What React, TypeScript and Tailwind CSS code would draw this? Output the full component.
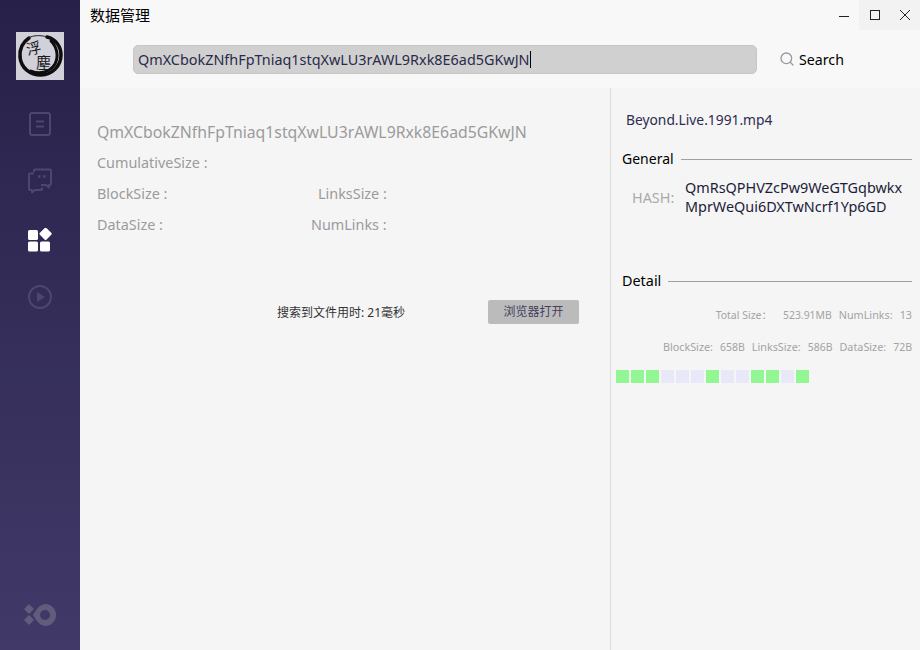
import React from 'react';
import { Search } from 'lucide-react';

const font = "font-['Noto_Sans','Noto_Sans_CJK_SC',sans-serif]";

const blocks = [1, 1, 1, 0, 0, 0, 1, 0, 0, 1, 1, 0, 1];

const Logo: React.FC = () => (
  <div className="w-12 h-12 bg-[#d2d0d9] flex items-center justify-center">
    <svg width="48" height="48" viewBox="0 0 48 48" fill="none">
      {/* brush ring, heavy along the bottom */}
      <path d="M31 5 C40 7 45 15 45 23 C45 34 36 43 25 43 C14 43 5 36 4 25 C3.500 17 7 10 13 6" stroke="#0e0e0e" strokeWidth="3.500" strokeLinecap="round" />
      <path d="M35 9 C41 15 43 24 39 32 C34 40 24 43 15 39" stroke="#0e0e0e" strokeWidth="3" strokeLinecap="round" />
      <path d="M12 6 C18 3 25 3 31 5" stroke="#222222" strokeWidth="1" />
      <text x="10" y="22" fontSize="15" fill="#1a1a1a" fontFamily="'Noto Sans CJK TC',sans-serif" transform="rotate(-12 17 16)">浮</text>
      <text x="20" y="36" fontSize="15" fill="#1a1a1a" fontFamily="'Noto Sans CJK TC',sans-serif">塵</text>
    </svg>
  </div>
);

const Sidebar: React.FC = () => (
  <div className="w-20 shrink-0 h-full flex flex-col items-center bg-gradient-to-b from-[#272149] to-[#413a69]">
    <div className="mt-8">
      <Logo />
    </div>
    <div className="mt-[31px] text-[#4c4670]">
      <svg width="24" height="26" viewBox="0 0 24 26" fill="none" stroke="currentColor" strokeWidth="2">
        <rect x="2" y="2" width="20" height="22" rx="2" />
        <path d="M8 10.500h8M8 15.500h8" />
      </svg>
    </div>
    <div className="mt-[31px] text-[#4c4670]">
      <svg width="26" height="26" viewBox="0 0 26 26" fill="none" stroke="currentColor" strokeWidth="2" strokeLinejoin="round">
        <path d="M7 4V2.500a1 1 0 0 1 1-1h15a1 1 0 0 1 1 1V16a1 1 0 0 1-1 1h-1v2.500L19 17h-5" />
        <path d="M7 5.500H3a1 1 0 0 0-1 1V21a1 1 0 0 0 1 1h2v2.500L8 22h6a1 1 0 0 0 1-1v-1.500" />
        <path d="M11 8.500h2.500M16 8.500h2.500" strokeWidth="2.500" />
      </svg>
    </div>
    <div className="mt-[34px]">
      <svg width="24" height="24" viewBox="0 0 24 24" fill="#ffffff">
        <rect x="0" y="2" width="10" height="10" rx="1.500" />
        <rect x="0" y="13.500" width="10" height="10" rx="1.500" />
        <rect x="12" y="13.500" width="10" height="10" rx="1.500" />
        <rect x="12.800" y="1" width="9.500" height="9.500" rx="1.500" transform="rotate(45 17.500 5.800)" />
      </svg>
    </div>
    <div className="mt-[33px] text-[#4c4670]">
      <svg width="24" height="24" viewBox="0 0 24 24" fill="none" stroke="currentColor" strokeWidth="2">
        <circle cx="12" cy="12" r="11" />
        <path d="M9 7l8 5-8 5z" fill="currentColor" stroke="none" />
      </svg>
    </div>
    <div className="mt-auto mb-[24px] text-[#625c7c]">
      <svg width="32" height="22" viewBox="0 0 32 22" fill="currentColor">
        <rect x="1.500" y="1.500" width="7" height="7" transform="rotate(45 5 5)" />
        <rect x="1.500" y="12.500" width="7" height="7" transform="rotate(45 5 16)" />
        <path fillRule="evenodd" d="M21 0a11 11 0 1 1 0 22Q15 22 9 11Q15 0 21 0zm0 6a5 5 0 1 0 0 10 5 5 0 0 0 0-10z" />
      </svg>
    </div>
  </div>
);

const App: React.FC = () => {
  return (
    <div className={`w-[920px] h-[650px] overflow-hidden flex bg-[#f5f5f5] ${font}`}>
      <Sidebar />
      <div className="flex-1 flex flex-col min-w-0">
        {/* title bar */}
        <div className="h-[30px] shrink-0 flex items-center justify-between bg-[#f8f8f8]">
          <span className="ml-[10px] text-[15px] leading-[28px] mb-[1px] text-black">数据管理</span>
          <div className="flex h-full">
            <div className="w-[30px] flex items-center justify-center text-[#222]">
              <svg width="10" height="10" viewBox="0 0 10 10" stroke="currentColor" fill="none"><path d="M0 6.500h10" /></svg>
            </div>
            <div className="w-[31px] flex items-center justify-center text-[#222] bg-[#f2f2f2]">
              <svg width="10" height="10" viewBox="0 0 10 10" stroke="currentColor" fill="none"><rect x="0.500" y="0.500" width="9" height="9" /></svg>
            </div>
            <div className="w-[30px] flex items-center justify-center text-[#222] bg-[#f2f2f2]">
              <svg width="10" height="10" viewBox="0 0 10 10" stroke="currentColor" fill="none"><path d="M0 0l10 10M10 0L0 10" /></svg>
            </div>
          </div>
        </div>

        {/* search row */}
        <div className="h-[58px] shrink-0 flex items-center bg-[#f8f8f8]">
          <div className="ml-[53px] w-[624px] h-[29px] rounded-[5px] border border-[#c6c6c6] bg-[#d0d0d0] flex items-center pl-1 text-[14.400px] text-[#2a2a4a]">
            <span className="pt-px">QmXCbokZNfhFpTniaq1stqXwLU3rAWL9Rxk8E6ad5GKwJN</span>
            <span className="w-px h-[17px] bg-black" />
          </div>
          <div className="ml-[22px] flex items-center gap-[4px] text-[14.200px] text-black">
            <Search size={16} strokeWidth={2} className="text-[#9a9a9a]" />
            <span className="pt-px">Search</span>
          </div>
        </div>

        <div className="flex-1 flex min-h-0">
          {/* left pane */}
          <div className="w-[531px] shrink-0 border-r border-[#dcdcdc] pl-[17px] text-[#9b9b9b] text-[14.400px]">
            <div className="mt-[32px] text-[15.800px] leading-[24px]">QmXCbokZNfhFpTniaq1stqXwLU3rAWL9Rxk8E6ad5GKwJN</div>
            <div className="mt-[9px] leading-[20px]">CumulativeSize :</div>
            <div className="mt-[11px] leading-[20px] flex">
              <span className="w-[221px]">BlockSize :</span>
              <span>LinksSize :</span>
            </div>
            <div className="mt-[11px] leading-[20px] flex">
              <span className="w-[214px]">DataSize :</span>
              <span>NumLinks :</span>
            </div>
            <div className="mt-[65px] flex items-center">
              <span className="ml-[180px] w-[211px] pt-[2px] text-[12px] text-[#333]">搜索到文件用时: 21毫秒</span>
              <button className="w-[91px] h-6 rounded-[2px] bg-[#bbbbbb] text-[12px] text-[#444060]">浏览器打开</button>
            </div>
          </div>

          {/* right pane */}
          <div className="flex-1 min-w-0 pr-2">
            <div className="ml-[15px] mt-[21px] text-[13.800px] leading-[22px] text-[#2f2a4f]">Beyond.Live.1991.mp4</div>
            <div className="ml-[11px] mt-[17px] flex items-center gap-[7px] text-[14px] leading-[22px] text-black">
              <span>General</span>
              <div className="flex-1 h-px bg-[#a0a0a0]" />
            </div>
            <div className="mt-[8px] flex">
              <span className="ml-[21px] w-[53px] pt-[10px] text-[14.400px] leading-[20px] text-[#aaaaaa]">HASH:</span>
              <div className="text-[14.400px] leading-[19px] text-[#1c1c3a]">
                QmRsQPHVZcPw9WeGTGqbwkx
                <br />
                MprWeQui6DXTwNcrf1Yp6GD
              </div>
            </div>
            <div className="ml-[11px] mt-[54px] flex items-center gap-[7px] text-[14.400px] leading-[22px] text-black">
              <span>Detail</span>
              <div className="flex-1 h-px bg-[#a0a0a0]" />
            </div>
            <div className="mt-[16px] flex justify-end gap-[7px] text-[10.800px] leading-[14px] text-[#a3a3a3]">
              <span className="text-[10.500px]">Total Size：</span>
              <span className="ml-[4px] text-[10.400px]">523.91MB</span>
              <span>NumLinks:</span>
              <span>13</span>
            </div>
            <div className="mt-[18px] flex justify-end gap-[7px] text-[10.800px] leading-[14px] text-[#a3a3a3]">
              <span>BlockSize:</span>
              <span className="text-[10.500px]">658B</span>
              <span>LinksSize:</span>
              <span className="text-[10.500px]">586B</span>
              <span>DataSize:</span>
              <span className="text-[10.500px]">72B</span>
            </div>
            <div className="ml-[5px] mt-[16px] flex gap-[2px]">
              {blocks.map((on, i) => (
                <div key={i} className={on ? 'w-[13px] h-[13px] bg-[#92f792]' : 'w-[13px] h-[13px] bg-[#e8e8f8]'} />
              ))}
            </div>
          </div>
        </div>
      </div>
    </div>
  );
};

export default App;
